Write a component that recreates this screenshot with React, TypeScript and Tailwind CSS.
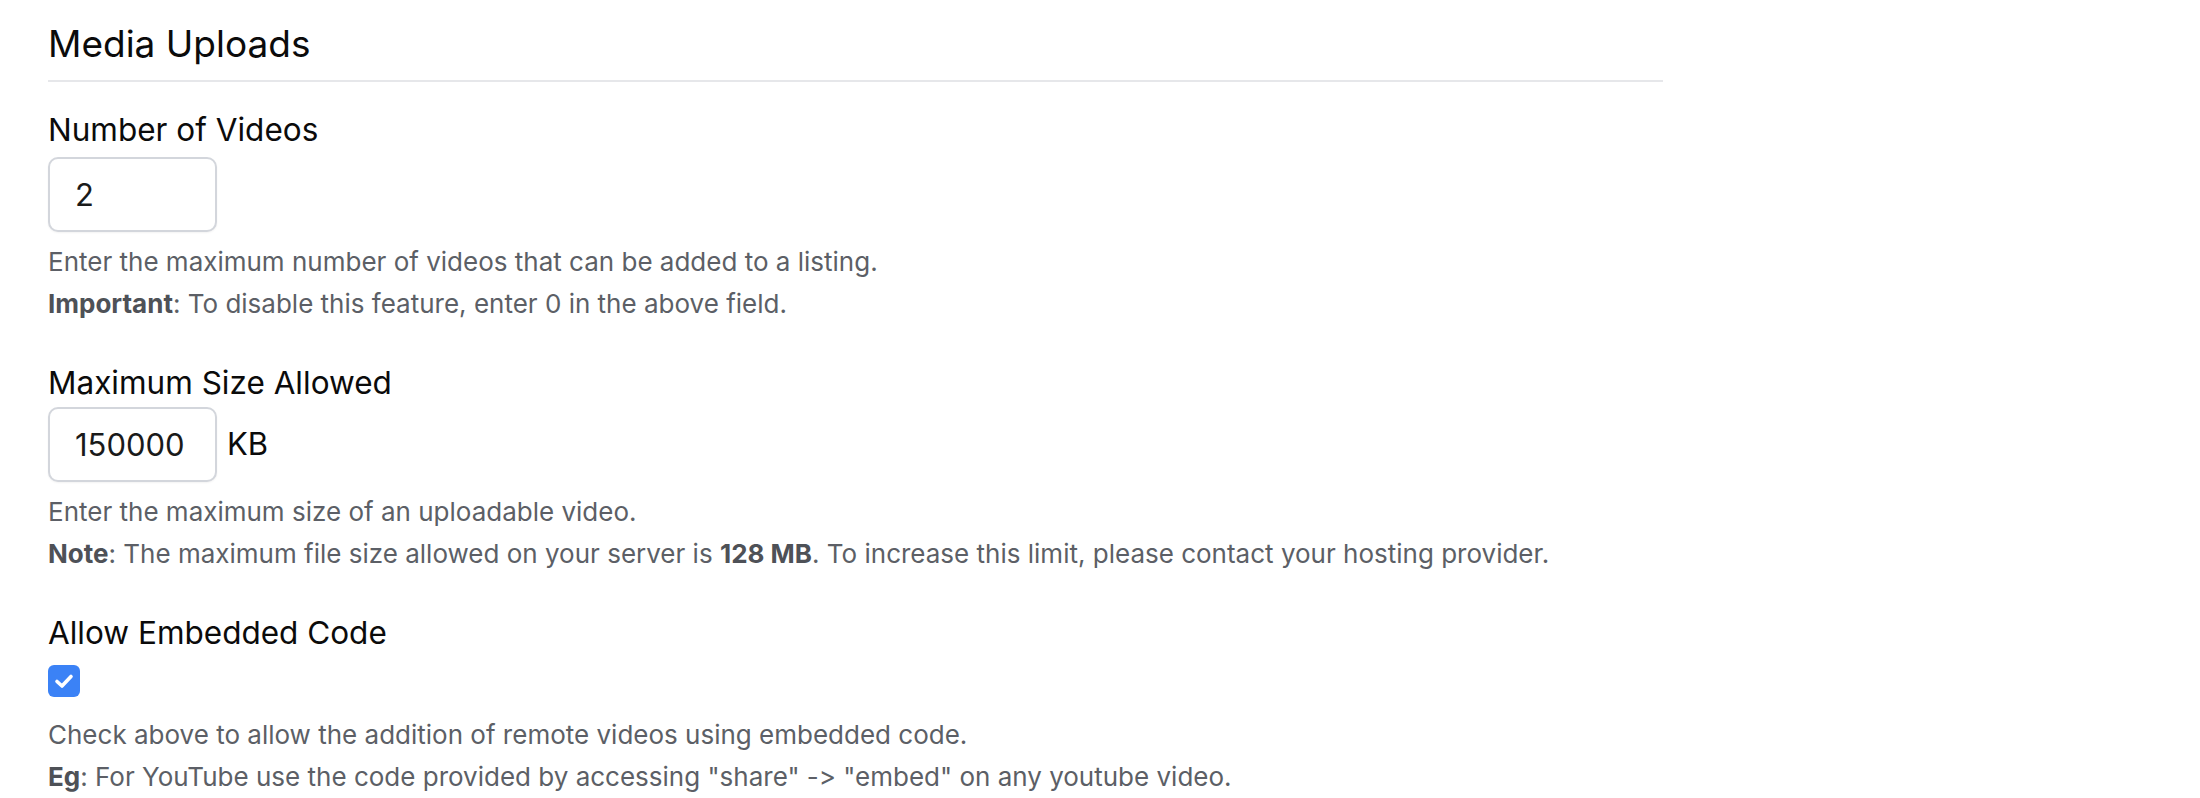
import React from 'react';

const Help: React.FC<{ children: React.ReactNode }> = ({ children }) => (
  <p className="text-[26px] leading-[42px] text-[#5c5f66]">{children}</p>
);

const Label: React.FC<{ children: React.ReactNode }> = ({ children }) => (
  <label className="block text-[31.5px] leading-[36px] text-[#0b0b0b]">{children}</label>
);

const NumberBox: React.FC<{ value: string }> = ({ value }) => (
  <input
    type="text"
    defaultValue={value}
    className="w-[169px] h-[75px] px-[25px] rounded-[10px] border-2 border-[#d3d6dc] bg-white text-[31px] text-[#1a1a1a] outline-none shadow-[0_1px_2px_rgba(0,0,0,0.05)]"
  />
);

export default function App() {
  return (
    <div className="min-h-screen bg-white font-['Inter',sans-serif] [font-variant-ligatures:none]">
      <div className="pl-[48px]">
        <div className="w-[1615px]">
          <h2 className="pt-[22px] pb-[14px] text-[37px] leading-[44px] text-[#0b0b0b] border-b-2 border-[#e6e7ea]">
            Media Uploads
          </h2>

          {/* Number of videos */}
          <div className="mt-[30px]">
            <Label>Number of Videos</Label>
            <div className="mt-[9px]">
              <NumberBox value="2" />
            </div>
            <div className="mt-[9px]">
              <Help>Enter the maximum number of videos that can be added to a listing.</Help>
              <Help>
                <b className="font-bold text-[#4e5157]">Important</b>: To disable this feature, enter 0 in the above field.
              </Help>
            </div>
          </div>

          {/* Max size */}
          <div className="mt-[40px]">
            <Label>Maximum Size Allowed</Label>
            <div className="mt-[6px] flex items-center gap-[10px]">
              <NumberBox value="150000" />
              <span className="text-[31px] text-[#0b0b0b]">KB</span>
            </div>
            <div className="mt-[9px]">
              <Help>Enter the maximum size of an uploadable video.</Help>
              <Help>
                <b className="font-bold text-[#4e5157]">Note</b>: The maximum file size allowed on your server is{' '}
                <b className="font-bold text-[#4e5157]">128 MB</b>. To increase this limit, please contact your hosting provider.
              </Help>
            </div>
          </div>

          {/* Embedded code */}
          <div className="mt-[40px]">
            <Label>Allow Embedded Code</Label>
            <div className="mt-[14px] w-[32px] h-[32px] rounded-[6px] bg-[#3b82f6] flex items-center justify-center">
              <svg viewBox="0 0 32 32" className="w-[32px] h-[32px]">
                <polyline
                  points="9,16.5 14,21 23,11.5"
                  fill="none"
                  stroke="#ffffff"
                  strokeWidth="3.6"
                  strokeLinecap="round"
                  strokeLinejoin="round"
                />
              </svg>
            </div>
            <div className="mt-[17px]">
              <Help>Check above to allow the addition of remote videos using embedded code.</Help>
              <Help>
                <b className="font-bold text-[#4e5157]">Eg</b>: For YouTube use the code provided by accessing "share" -&gt; "embed" on any youtube video.
              </Help>
            </div>
          </div>
        </div>
      </div>
    </div>
  );
}
